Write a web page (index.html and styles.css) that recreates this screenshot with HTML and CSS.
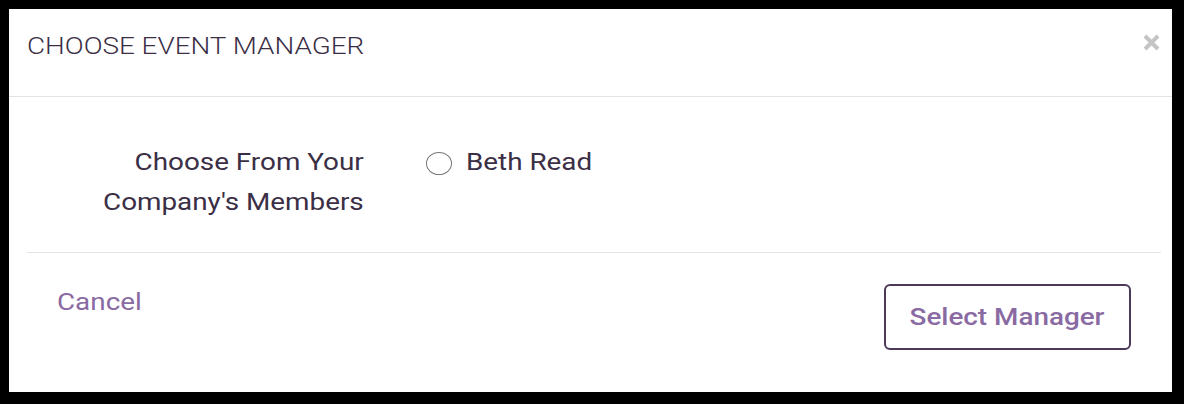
FILE: index.html
```html
<!DOCTYPE html>
<html>
<head>
<meta charset="utf-8">
<link rel="stylesheet" href="styles.css">
</head>
<body>
<div class="modal">
  <div class="modal-header">
    <h2 class="modal-title"><span class="wide wide-left">CHOOSE EVENT MANAGER</span></h2>
    <button class="close" aria-label="Close">
      <svg width="17" height="17" viewBox="0 0 17 17"><path d="M2 2 L15 15 M15 2 L2 15" stroke="#c4c4c4" stroke-width="4" fill="none"/></svg>
    </button>
  </div>
  <div class="modal-body">
    <div class="field-label"><span class="wide wide-right">Choose From Your<br>Company's Members</span></div>
    <label class="option">
      <span class="radio"></span>
      <span class="option-text wide wide-left">Beth Read</span>
    </label>
  </div>
  <div class="modal-footer">
    <a class="cancel"><span class="wide wide-left">Cancel</span></a>
    <button class="btn-select"><span class="wide">Select Manager</span></button>
  </div>
</div>
</body>
</html>
```

FILE: styles.css
```css
* { box-sizing: border-box; }
html, body { margin: 0; padding: 0; }
body {
  background: #000;
  width: 1184px;
  height: 404px;
  font-family: Roboto, "Liberation Sans", sans-serif;
  overflow: hidden;
}
.wide {
  display: inline-block;
  transform: scaleX(1.16);
  transform-origin: center center;
}
.wide-left { transform-origin: left center; }
.wide-right { transform-origin: right center; }
.modal {
  margin: 9px 0 0 9px;
  width: 1163px;
  height: 383px;
  background: #fff;
}
.modal-header {
  height: 88px;
  border-bottom: 1px solid #e3e3e3;
  display: flex;
  justify-content: space-between;
  align-items: flex-start;
  padding: 0 12px 0 18px;
}
.modal-title {
  margin: 23px 0 0 0;
  font-size: 24px;
  line-height: 28px;
  font-weight: 300;
  color: #3b2f46;
}
.close {
  margin-top: 25px;
  padding: 0;
  border: 0;
  background: none;
  width: 17px;
  height: 17px;
  display: block;
}
.close svg { display: block; }
.modal-body {
  margin: 0 11px 0 18px;
  padding: 45px 0 30px 0;
  border-bottom: 1px solid #e3e3e3;
  display: flex;
  align-items: flex-start;
}
.field-label {
  width: 337px;
  text-align: right;
  font-size: 24px;
  line-height: 40px;
  color: #3b2f46;
}
.option {
  margin-left: 62px;
  display: flex;
  align-items: center;
  height: 40px;
}
.radio {
  width: 26px;
  height: 23px;
  border: 1.6px solid #767676;
  border-radius: 50%;
  display: block;
  margin-top: 2px;
}
.option-text {
  margin-left: 14px;
  font-size: 24px;
  color: #3b2f46;
}
.modal-footer {
  display: flex;
  justify-content: space-between;
  align-items: flex-start;
  padding: 31px 41px 0 48px;
}
.cancel {
  font-size: 24px;
  line-height: 28px;
  color: #8a6aa2;
  margin-top: 4px;
}
.btn-select {
  height: 66px;
  width: 247px;
  padding: 0;
  border: 2px solid #4a3a57;
  border-radius: 6px;
  background: #fff;
  font-family: Roboto, "Liberation Sans", sans-serif;
  font-size: 24px;
  font-weight: 500;
  color: #8a6aa2;
}
```
